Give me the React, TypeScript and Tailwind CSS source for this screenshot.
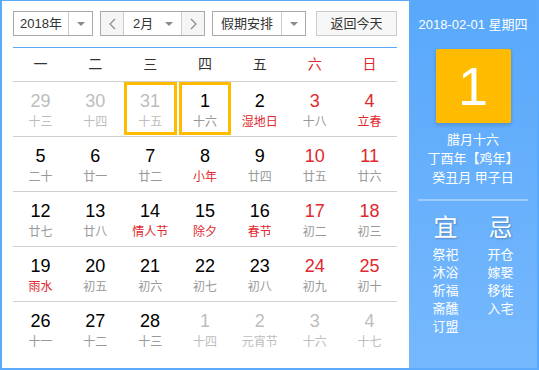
type Cell = { d: number; l: string; other?: boolean; fest?: boolean; sel?: boolean };

const rows: Cell[][] = [
  [
    { d: 29, l: "十三", other: true },
    { d: 30, l: "十四", other: true },
    { d: 31, l: "十五", other: true, sel: true },
    { d: 1, l: "十六", sel: true },
    { d: 2, l: "湿地日", fest: true },
    { d: 3, l: "十八" },
    { d: 4, l: "立春", fest: true },
  ],
  [
    { d: 5, l: "二十" },
    { d: 6, l: "廿一" },
    { d: 7, l: "廿二" },
    { d: 8, l: "小年", fest: true },
    { d: 9, l: "廿四" },
    { d: 10, l: "廿五" },
    { d: 11, l: "廿六" },
  ],
  [
    { d: 12, l: "廿七" },
    { d: 13, l: "廿八" },
    { d: 14, l: "情人节", fest: true },
    { d: 15, l: "除夕", fest: true },
    { d: 16, l: "春节", fest: true },
    { d: 17, l: "初二" },
    { d: 18, l: "初三" },
  ],
  [
    { d: 19, l: "雨水", fest: true },
    { d: 20, l: "初五" },
    { d: 21, l: "初六" },
    { d: 22, l: "初七" },
    { d: 23, l: "初八" },
    { d: 24, l: "初九" },
    { d: 25, l: "初十" },
  ],
  [
    { d: 26, l: "十一" },
    { d: 27, l: "十二" },
    { d: 28, l: "十三" },
    { d: 1, l: "十四", other: true },
    { d: 2, l: "元宵节", other: true },
    { d: 3, l: "十六", other: true },
    { d: 4, l: "十七", other: true },
  ],
];

const weekdays = ["一", "二", "三", "四", "五", "六", "日"];
const yi = ["祭祀", "沐浴", "祈福", "斋醮", "订盟"];
const ji = ["开仓", "嫁娶", "移徙", "入宅"];

function Caret() {
  return <span className="h-0 w-0 border-x-[4px] border-t-[4px] border-x-transparent border-t-[#8a8a8a]" />;
}

function Chevron({ right }: { right?: boolean }) {
  return (
    <svg width="7" height="12" viewBox="0 0 7 12">
      <polyline
        points={right ? "1,1 6,6 1,11" : "6,1 1,6 6,11"}
        fill="none"
        stroke="#8a8a8a"
        strokeWidth="1.2"
      />
    </svg>
  );
}

function DayCell({ c, col }: { c: Cell; col: number }) {
  const weekend = col >= 5;
  let num = "text-black";
  if (c.other) num = "text-[#bdbdbd]";
  else if (weekend) num = "text-[#e0282e]";
  let lunar = "text-[#999]";
  if (c.other) lunar = "text-[#bdbdbd]";
  else if (c.fest) lunar = "text-[#e0282e]";

  return (
    <div className="relative flex flex-col items-center pt-[9px]">
      <div className={`text-[18px] leading-[20px] ${num}`}>{c.d}</div>
      <div className={`mt-[3px] text-[12px] leading-[16px] ${lunar}`}>{c.l}</div>
      {c.sel ? (
        <div className="absolute top-0 right-[1px] bottom-[1px] left-[1px] border-[3px] border-[#ffbb00]" />
      ) : null}
    </div>
  );
}

export default function App() {
  return (
    <div className="flex h-[370px] w-[539px] border-2 border-t border-[#5ba9fa] font-['Liberation_Sans','Noto_Sans_CJK_SC',sans-serif]">
      <div className="w-[407px] bg-white pt-[10px] pl-[11px]">
        <div className="flex h-[25px] text-[13px] text-[#333]">
          <div className="flex w-[80px] border border-[#a9a9a9] bg-white">
            <div className="flex flex-1 items-center justify-center">2018年</div>
            <div className="flex w-[24px] items-center justify-center border-l border-[#ccc]">
              <Caret />
            </div>
          </div>
          <div className="ml-[7px] flex w-[105px] border border-[#a9a9a9]">
            <div className="flex w-[22px] items-center justify-center bg-[#f5f5f5]">
              <Chevron />
            </div>
            <div className="flex flex-1 items-center border-x border-[#ccc] bg-white pl-[9px] pr-[8px]">
              <span className="flex-1">2月</span>
              <Caret />
            </div>
            <div className="flex w-[22px] items-center justify-center bg-[#f5f5f5]">
              <Chevron right />
            </div>
          </div>
          <div className="ml-[7px] flex w-[94px] border border-[#a9a9a9] bg-white">
            <div className="flex flex-1 items-center justify-center">假期安排</div>
            <div className="flex w-[24px] items-center justify-center border-l border-[#ccc]">
              <Caret />
            </div>
          </div>
          <button className="ml-[10px] flex w-[81px] items-center justify-center border border-[#ccc] bg-[#f7f7f7]">
            返回今天
          </button>
        </div>

        <div className="mt-[11px] w-[384px]">
          <div className="h-px bg-[#5ba9fa]" />
          <div className="grid h-[34px] grid-cols-7 border-b border-[#cfcfcf] text-[14px]">
            {weekdays.map((w, i) => (
              <div
                key={w}
                className={`flex items-center justify-center ${i >= 5 ? "text-[#e0282e]" : "text-[#333]"}`}
              >
                {w}
              </div>
            ))}
          </div>
          {rows.map((r, ri) => (
            <div
              key={ri}
              className={`grid h-[55px] grid-cols-7 ${ri < rows.length - 1 ? "border-b border-[#cfcfcf]" : ""}`}
            >
              {r.map((c, ci) => (
                <DayCell key={ci} c={c} col={ci} />
              ))}
            </div>
          ))}
        </div>
      </div>

      <div className="flex flex-1 flex-col items-center bg-linear-to-b from-[#58a8fb] to-[#76b8fd] text-white">
        <div className="pt-[16px] text-[13px] leading-[16px]">2018-02-01 星期四</div>
        <div className="mt-[16px] flex h-[74px] w-[75px] items-center justify-center rounded-[2px] bg-[#ffbb00] text-[54px] leading-none shadow-[0_2px_4px_rgba(0,0,0,0.18)]">
          1
        </div>
        <div className="mt-[7px] flex flex-col items-center text-[13px] leading-[19px]">
          <div>腊月十六</div>
          <div>丁酉年【鸡年】</div>
          <div>癸丑月 甲子日</div>
        </div>
        <div className="mt-[12px] h-[2px] w-[110px] bg-[#9ecbfd]" />
        <div className="mt-[13px] flex">
          <div className="flex w-[55px] flex-col items-center">
            <div className="text-[24px] leading-[28px] [text-shadow:1px_1px_2px_rgba(0,0,0,0.25)]">宜</div>
            <div className="mt-[4px] flex flex-col items-center text-[13px] leading-[18px]">
              {yi.map((t) => (
                <div key={t}>{t}</div>
              ))}
            </div>
          </div>
          <div className="flex w-[55px] flex-col items-center">
            <div className="text-[24px] leading-[28px] [text-shadow:1px_1px_2px_rgba(0,0,0,0.25)]">忌</div>
            <div className="mt-[4px] flex flex-col items-center text-[13px] leading-[18px]">
              {ji.map((t) => (
                <div key={t}>{t}</div>
              ))}
            </div>
          </div>
        </div>
      </div>
    </div>
  );
}
